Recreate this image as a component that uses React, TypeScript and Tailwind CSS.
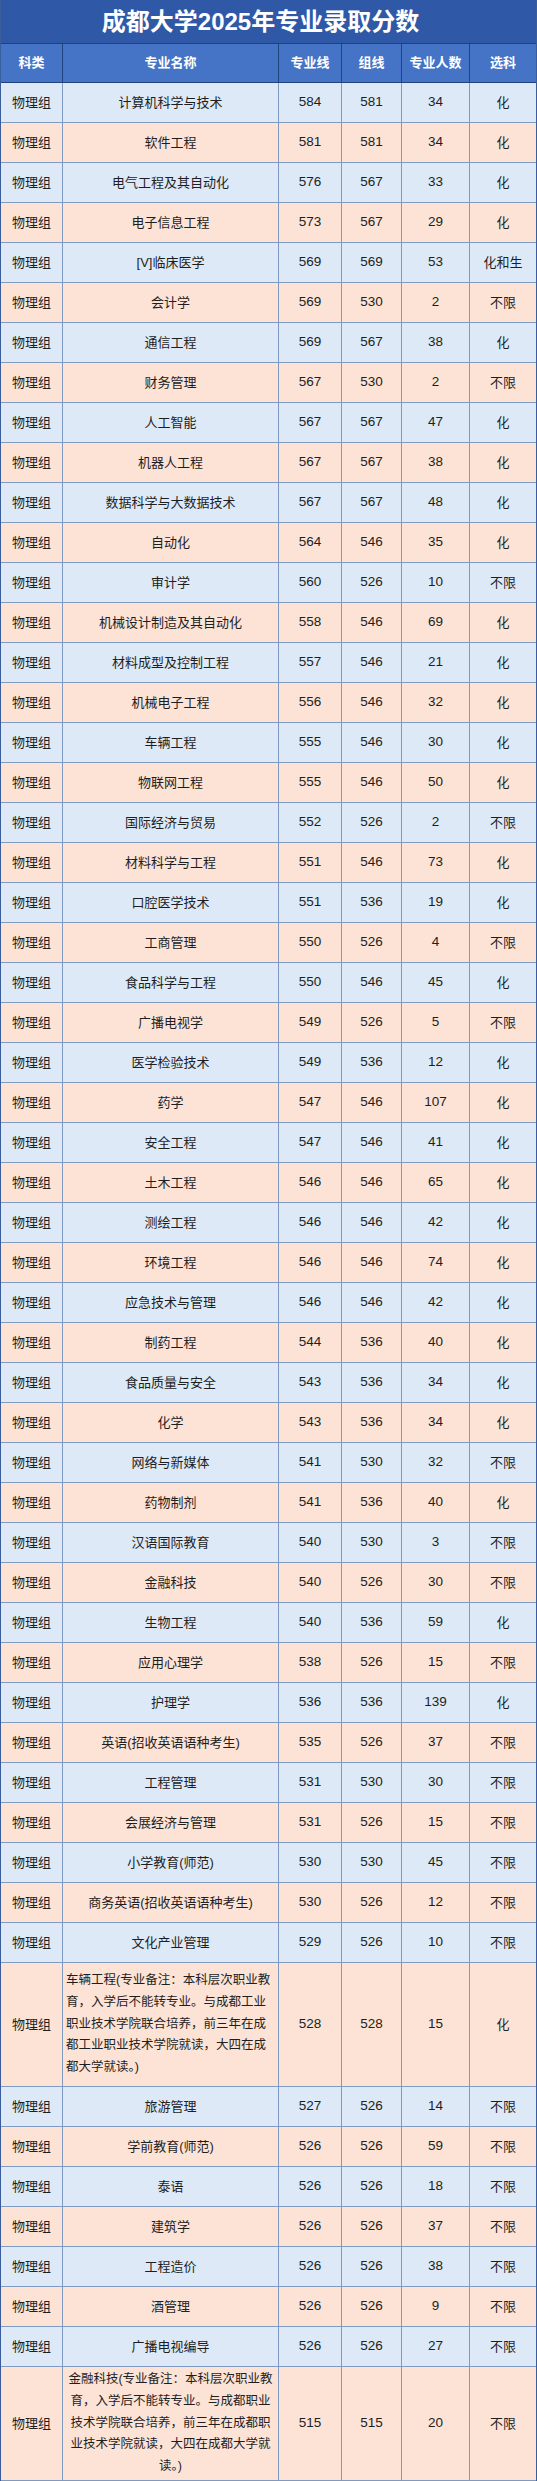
import React from "react";

type Row = [string, string, string, string, string];

const rows: Row[] = [
  ["计算机科学与技术", "584", "581", "34", "化"],
  ["软件工程", "581", "581", "34", "化"],
  ["电气工程及其自动化", "576", "567", "33", "化"],
  ["电子信息工程", "573", "567", "29", "化"],
  ["[V]临床医学", "569", "569", "53", "化和生"],
  ["会计学", "569", "530", "2", "不限"],
  ["通信工程", "569", "567", "38", "化"],
  ["财务管理", "567", "530", "2", "不限"],
  ["人工智能", "567", "567", "47", "化"],
  ["机器人工程", "567", "567", "38", "化"],
  ["数据科学与大数据技术", "567", "567", "48", "化"],
  ["自动化", "564", "546", "35", "化"],
  ["审计学", "560", "526", "10", "不限"],
  ["机械设计制造及其自动化", "558", "546", "69", "化"],
  ["材料成型及控制工程", "557", "546", "21", "化"],
  ["机械电子工程", "556", "546", "32", "化"],
  ["车辆工程", "555", "546", "30", "化"],
  ["物联网工程", "555", "546", "50", "化"],
  ["国际经济与贸易", "552", "526", "2", "不限"],
  ["材料科学与工程", "551", "546", "73", "化"],
  ["口腔医学技术", "551", "536", "19", "化"],
  ["工商管理", "550", "526", "4", "不限"],
  ["食品科学与工程", "550", "546", "45", "化"],
  ["广播电视学", "549", "526", "5", "不限"],
  ["医学检验技术", "549", "536", "12", "化"],
  ["药学", "547", "546", "107", "化"],
  ["安全工程", "547", "546", "41", "化"],
  ["土木工程", "546", "546", "65", "化"],
  ["测绘工程", "546", "546", "42", "化"],
  ["环境工程", "546", "546", "74", "化"],
  ["应急技术与管理", "546", "546", "42", "化"],
  ["制药工程", "544", "536", "40", "化"],
  ["食品质量与安全", "543", "536", "34", "化"],
  ["化学", "543", "536", "34", "化"],
  ["网络与新媒体", "541", "530", "32", "不限"],
  ["药物制剂", "541", "536", "40", "化"],
  ["汉语国际教育", "540", "530", "3", "不限"],
  ["金融科技", "540", "526", "30", "不限"],
  ["生物工程", "540", "536", "59", "化"],
  ["应用心理学", "538", "526", "15", "不限"],
  ["护理学", "536", "536", "139", "化"],
  ["英语(招收英语语种考生)", "535", "526", "37", "不限"],
  ["工程管理", "531", "530", "30", "不限"],
  ["会展经济与管理", "531", "526", "15", "不限"],
  ["小学教育(师范)", "530", "530", "45", "不限"],
  ["商务英语(招收英语语种考生)", "530", "526", "12", "不限"],
  ["文化产业管理", "529", "526", "10", "不限"],
];

const rows2: Row[] = [
  ["旅游管理", "527", "526", "14", "不限"],
  ["学前教育(师范)", "526", "526", "59", "不限"],
  ["泰语", "526", "526", "18", "不限"],
  ["建筑学", "526", "526", "37", "不限"],
  ["工程造价", "526", "526", "38", "不限"],
  ["酒管理", "526", "526", "9", "不限"],
  ["广播电视编导", "526", "526", "27", "不限"],
];

const note1 = [
  "车辆工程(专业备注：本科层次职业教",
  "育，入学后不能转专业。与成都工业",
  "职业技术学院联合培养，前三年在成",
  "都工业职业技术学院就读，大四在成",
  "都大学就读。)",
];

const note2 = [
  "金融科技(专业备注：本科层次职业教",
  "育，入学后不能转专业。与成都职业",
  "技术学院联合培养，前三年在成都职",
  "业技术学院就读，大四在成都大学就",
  "读。)",
];

const cols = "grid grid-cols-[62px_216px_63px_60px_68px_66px]";
const cell = "flex items-center justify-center border-r border-[#7f9bc3]";
const num = "flex items-center justify-center border-r border-[#7f9bc3] text-[13.5px]";

function DataRow({ r, orange }: { r: Row; orange: boolean }) {
  return (
    <div className={`${cols} h-[40px] border-b border-[#7f9bc3] ${orange ? "bg-[#fce3d6]" : "bg-[#dde9f6]"}`}>
      <div className={cell}>物理组</div>
      <div className={`${cell} whitespace-nowrap`}>{r[0]}</div>
      <div className={num}>{r[1]}</div>
      <div className={num}>{r[2]}</div>
      <div className={num}>{r[3]}</div>
      <div className="flex items-center justify-center">{r[4]}</div>
    </div>
  );
}

function NoteRow({ lines, vals, h, center }: { lines: string[]; vals: string[]; h: string; center: boolean }) {
  return (
    <div className={`${cols} ${h} border-b border-[#7f9bc3] bg-[#fce3d6]`}>
      <div className={cell}>物理组</div>
      <div className={`flex flex-col justify-center border-r border-[#7f9bc3] px-[3px] text-[12.5px] leading-[21.7px] whitespace-nowrap ${center ? "items-center" : "items-start"}`}>
        {lines.map((l) => (
          <span key={l}>{l}</span>
        ))}
      </div>
      <div className={num}>{vals[0]}</div>
      <div className={num}>{vals[1]}</div>
      <div className={num}>{vals[2]}</div>
      <div className="flex items-center justify-center">{vals[3]}</div>
    </div>
  );
}

export default function App() {
  return (
    <div className="w-[537px] border-x border-[#3a5d9c] text-[13px] text-[#1e1e1e] font-['Liberation_Sans','Noto_Sans_CJK_SC',sans-serif]">
      <div className="h-[44px] bg-[#2f58a6] border-b border-[#22427c] flex items-center justify-center pr-[16px] text-white text-[24px] font-bold">
        成都大学2025年专业录取分数
      </div>
      <div className={`${cols} h-[39px] bg-[#4573c5] border-b border-[#22427c] text-white font-bold text-[13px]`}>
        <div className="flex items-center justify-center border-r border-[#22427c]">科类</div>
        <div className="flex items-center justify-center border-r border-[#22427c]">专业名称</div>
        <div className="flex items-center justify-center border-r border-[#22427c]">专业线</div>
        <div className="flex items-center justify-center border-r border-[#22427c]">组线</div>
        <div className="flex items-center justify-center border-r border-[#22427c]">专业人数</div>
        <div className="flex items-center justify-center">选科</div>
      </div>
      {rows.map((r, i) => (
        <DataRow key={r[0] + i} r={r} orange={i % 2 === 1} />
      ))}
      <NoteRow lines={note1} vals={["528", "528", "15", "化"]} h="h-[124px]" center={false} />
      {rows2.map((r, i) => (
        <DataRow key={r[0] + i} r={r} orange={i % 2 === 1} />
      ))}
      <NoteRow lines={note2} vals={["515", "515", "20", "不限"]} h="h-[114px]" center={true} />
    </div>
  );
}
